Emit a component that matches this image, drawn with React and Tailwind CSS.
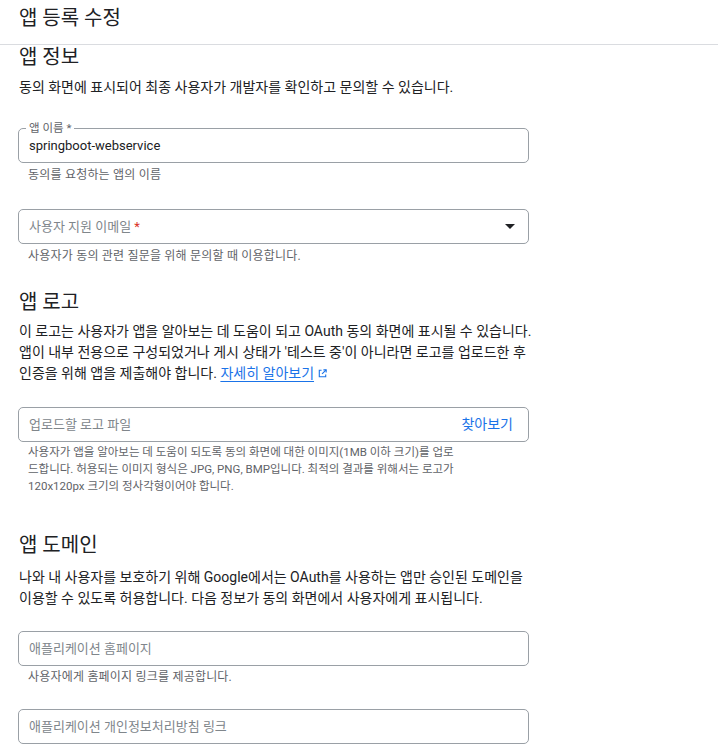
import React from "react";

const font = { fontFamily: 'Roboto, "Noto Sans CJK KR", sans-serif' };

function Field({ label, value, placeholder, required, right, dropdown }) {
  return (
    <div className="relative h-[35px] w-[511px] rounded-[5px] border border-[#9aa0a6] bg-white">
      {label && (
        <span className="absolute -top-[8px] left-[7px] bg-white px-[3px] text-[11.5px] leading-[14px] text-[#5f6368]">
          {label}
          {required && <span> *</span>}
        </span>
      )}
      <div className="flex h-full items-center justify-between pl-[10px] pr-[12px]">
        {value ? (
          <span className="text-[13px] text-[#202124]">{value}</span>
        ) : (
          <span className="text-[13px] text-[#80868b]">
            {placeholder}
            {required && <span className="text-[#d93025]"> *</span>}
          </span>
        )}
        {right && <span className="pr-[3px] text-[14px] text-[#1a73e8]">{right}</span>}
        {dropdown && (
          <svg width="10" height="5" viewBox="0 0 10 5" className="mr-[1px]">
            <path d="M0 0h10L5 5z" fill="#202124" />
          </svg>
        )}
      </div>
    </div>
  );
}

function Helper({ children, small }) {
  return (
    <div
      className={`pl-[10px] leading-[17px] text-[#5f6368] ${small ? "text-[11.5px]" : "text-[12px] tracking-[0.2px]"}`}
    >
      {children}
    </div>
  );
}

function Heading({ children, className = "" }) {
  return (
    <h2 className={`text-[20px] leading-[24px] font-normal text-[#202124] ${className}`}>
      {children}
    </h2>
  );
}

export default function App() {
  return (
    <div className="h-[747px] w-[718px] overflow-hidden bg-white" style={font}>
      <header className="flex h-[45px] items-start border-b border-[#dadce0] pl-[19px] pt-[4px]">
        <h1 className="text-[20px] leading-[28px] font-normal text-[#202124]">앱 등록 수정</h1>
      </header>

      <main className="pl-[18px]">
        <section>
          <Heading className="pl-[1px]">앱 정보</Heading>
          <p className="mt-[8px] pl-[1px] text-[14px] leading-[20px] text-[#202124]">
            동의 화면에 표시되어 최종 사용자가 개발자를 확인하고 문의할 수 있습니다.
          </p>

          <div className="mt-[31px]">
            <Field label="앱 이름" required value="springboot-webservice" />
            <div className="mt-[4px]">
              <Helper>동의를 요청하는 앱의 이름</Helper>
            </div>
          </div>

          <div className="mt-[25px]">
            <Field placeholder="사용자 지원 이메일" required dropdown />
            <div className="mt-[4px]">
              <Helper>사용자가 동의 관련 질문을 위해 문의할 때 이용합니다.</Helper>
            </div>
          </div>
        </section>

        <section className="mt-[25px]">
          <Heading className="pl-[1px]">앱 로고</Heading>
          <p className="mt-[7px] pl-[1px] text-[14px] leading-[21px] text-[#202124]">
            <span className="block whitespace-nowrap">
              이 로고는 사용자가 앱을 알아보는 데 도움이 되고 OAuth 동의 화면에 표시될 수 있습니다.
            </span>
            <span className="block whitespace-nowrap">
              앱이 내부 전용으로 구성되었거나 게시 상태가 '테스트 중'이 아니라면 로고를 업로드한 후
            </span>
            <span className="block whitespace-nowrap">
              인증을 위해 앱을 제출해야 합니다.{" "}
              <a className="inline-flex items-center gap-[3px] text-[#1a73e8]">
                <span className="underline underline-offset-[3px]">자세히 알아보기</span>
                <svg width="11" height="11" viewBox="0 0 24 24" fill="none" stroke="#1a73e8" strokeWidth="2.4">
                  <path d="M19 14v5H5V5h5" />
                  <path d="M14 4h6v6" />
                  <path d="M20 4l-9 9" />
                </svg>
              </a>
            </span>
          </p>

          <div className="mt-[23px]">
            <Field placeholder="업로드할 로고 파일" right="찾아보기" />
            <div className="mt-[2px]">
              <Helper small>
                <span className="block whitespace-nowrap">
                  사용자가 앱을 알아보는 데 도움이 되도록 동의 화면에 대한 이미지(1MB 이하 크기)를 업로
                </span>
                <span className="block whitespace-nowrap">
                  드합니다. 허용되는 이미지 형식은 JPG, PNG, BMP입니다. 최적의 결과를 위해서는 로고가
                </span>
                <span className="block whitespace-nowrap">120x120px 크기의 정사각형이어야 합니다.</span>
              </Helper>
            </div>
          </div>
        </section>

        <section className="mt-[38px]">
          <Heading className="pl-[1px]">앱 도메인</Heading>
          <p className="mt-[10px] pl-[1px] text-[14px] leading-[21px] text-[#202124]">
            <span className="block whitespace-nowrap">
              나와 내 사용자를 보호하기 위해 Google에서는 OAuth를 사용하는 앱만 승인된 도메인을
            </span>
            <span className="block whitespace-nowrap">
              이용할 수 있도록 허용합니다. 다음 정보가 동의 화면에서 사용자에게 표시됩니다.
            </span>
          </p>

          <div className="mt-[22px]">
            <Field placeholder="애플리케이션 홈페이지" />
            <div className="mt-[3px]">
              <Helper>사용자에게 홈페이지 링크를 제공합니다.</Helper>
            </div>
          </div>

          <div className="mt-[23px]">
            <Field placeholder="애플리케이션 개인정보처리방침 링크" />
          </div>
        </section>
      </main>
    </div>
  );
}
